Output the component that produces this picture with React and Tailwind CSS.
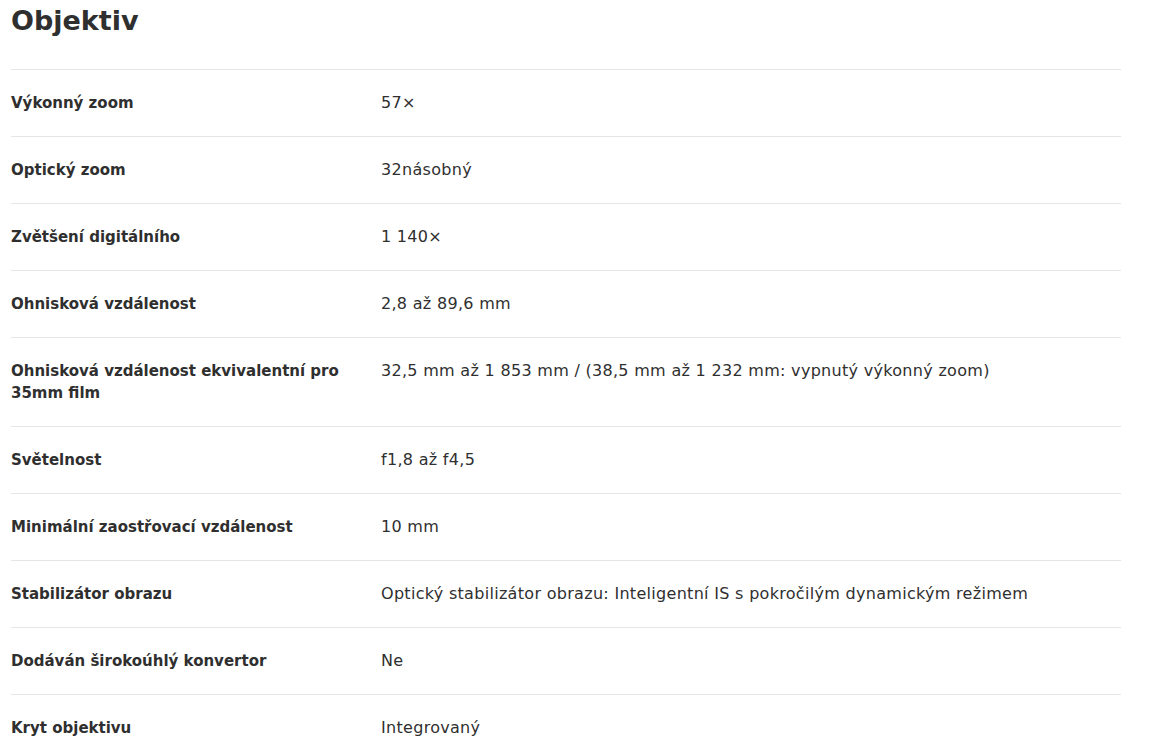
import React from "react";

const specs = [
  { label: "Výkonný zoom", value: "57×" },
  { label: "Optický zoom", value: "32násobný" },
  { label: "Zvětšení digitálního", value: "1 140×" },
  { label: "Ohnisková vzdálenost", value: "2,8 až 89,6 mm" },
  {
    label: "Ohnisková vzdálenost ekvivalentní pro 35mm film",
    value: "32,5 mm až 1 853 mm / (38,5 mm až 1 232 mm: vypnutý výkonný zoom)",
  },
  { label: "Světelnost", value: "f1,8 až f4,5" },
  { label: "Minimální zaostřovací vzdálenost", value: "10 mm" },
  {
    label: "Stabilizátor obrazu",
    value: "Optický stabilizátor obrazu: Inteligentní IS s pokročilým dynamickým režimem",
  },
  { label: "Dodáván širokoúhlý konvertor", value: "Ne" },
  { label: "Kryt objektivu", value: "Integrovaný" },
];

const App = () => {
  return (
    <div className="min-h-screen bg-white pl-[11px] text-[#2f2f2f] font-['DejaVu_Sans',sans-serif]">
      <div className="w-[1110px]">
        {/* Heading */}
        <h2 className="pt-[4px] h-[69px] text-[27px] leading-[34px] font-bold">Objektiv</h2>

        {/* Spec rows */}
        <div>
          {specs.map(spec => (
            <div key={spec.label} className="flex border-t border-[#e6e6e6] py-[22px]">
              <div className="w-[370px] pr-[20px] text-[15px] leading-[22px] font-bold">{spec.label}</div>
              <div className="flex-1 text-[16px] leading-[22px] tracking-[0.3px]">{spec.value}</div>
            </div>
          ))}
        </div>
      </div>
    </div>
  );
};

export default App;
